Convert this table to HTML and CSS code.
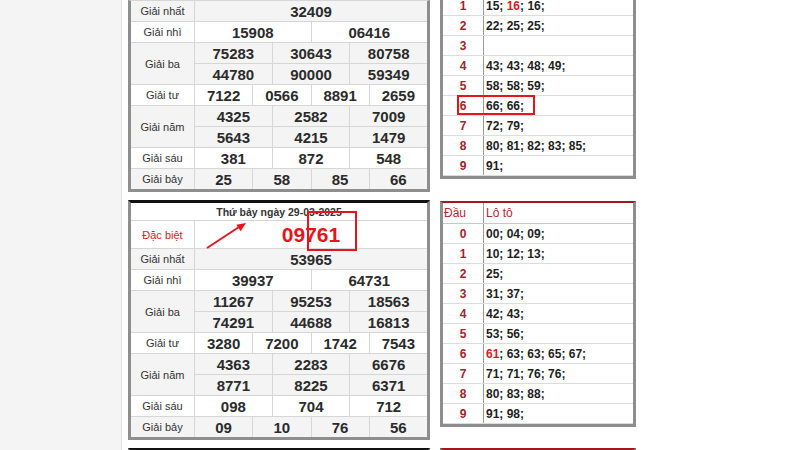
FILE: index.html
```html
<!DOCTYPE html>
<html lang="vi">
<head>
<meta charset="utf-8">
<title>Kết quả xổ số</title>
<link rel="stylesheet" href="styles.css">
</head>
<body>
<div class="page">
  <div class="side"></div>
  <main class="main">
    <section class="col-left">
      <div class="kq kq-top">
        <div class="lbl alt">Giải nhất</div><div class="num c1 alt">32409</div>
        <div class="lbl">Giải nhì</div><div class="num c2">15908</div><div class="num c2">06416</div>
        <div class="lbl alt r2">Giải ba</div><div class="num c3 alt">75283</div><div class="num c3 alt">30643</div><div class="num c3 alt">80758</div>
        <div class="num c3 alt">44780</div><div class="num c3 alt">90000</div><div class="num c3 alt">59349</div>
        <div class="lbl">Giải tư</div><div class="num c4">7122</div><div class="num c4">0566</div><div class="num c4">8891</div><div class="num c4">2659</div>
        <div class="lbl alt r2">Giải năm</div><div class="num c3 alt">4325</div><div class="num c3 alt">2582</div><div class="num c3 alt">7009</div>
        <div class="num c3 alt">5643</div><div class="num c3 alt">4215</div><div class="num c3 alt">1479</div>
        <div class="lbl">Giải sáu</div><div class="num c3">381</div><div class="num c3">872</div><div class="num c3">548</div>
        <div class="lbl alt">Giải bảy</div><div class="num c4 alt">25</div><div class="num c4 alt">58</div><div class="num c4 alt">85</div><div class="num c4 alt">66</div>
      </div>

      <div class="kq kq-full">
        <div class="hdr">Thứ bảy ngày 29-03-2025</div>
        <div class="lbl red">Đặc biệt</div><div class="num c1 db">09761</div>
        <div class="lbl alt">Giải nhất</div><div class="num c1 alt">53965</div>
        <div class="lbl">Giải nhì</div><div class="num c2">39937</div><div class="num c2">64731</div>
        <div class="lbl alt r2">Giải ba</div><div class="num c3 alt">11267</div><div class="num c3 alt">95253</div><div class="num c3 alt">18563</div>
        <div class="num c3 alt">74291</div><div class="num c3 alt">44688</div><div class="num c3 alt">16813</div>
        <div class="lbl">Giải tư</div><div class="num c4">3280</div><div class="num c4">7200</div><div class="num c4">1742</div><div class="num c4">7543</div>
        <div class="lbl alt r2">Giải năm</div><div class="num c3 alt">4363</div><div class="num c3 alt">2283</div><div class="num c3 alt">6676</div>
        <div class="num c3 alt">8771</div><div class="num c3 alt">8225</div><div class="num c3 alt">6371</div>
        <div class="lbl">Giải sáu</div><div class="num c3">098</div><div class="num c3">704</div><div class="num c3">712</div>
        <div class="lbl alt">Giải bảy</div><div class="num c4 alt">09</div><div class="num c4 alt">10</div><div class="num c4 alt">76</div><div class="num c4 alt">56</div>
      </div>

      <div class="kq-next"></div>
    </section>

    <section class="col-right">
      <div class="lt lt-top">
        <div class="row"><span class="dau">1</span><span class="lo">15; <em>16</em>; 16;</span></div>
        <div class="row"><span class="dau">2</span><span class="lo">22; 25; 25;</span></div>
        <div class="row"><span class="dau">3</span><span class="lo"></span></div>
        <div class="row"><span class="dau">4</span><span class="lo">43; 43; 48; 49;</span></div>
        <div class="row"><span class="dau">5</span><span class="lo">58; 58; 59;</span></div>
        <div class="row"><span class="dau">6</span><span class="lo">66; 66;</span></div>
        <div class="row"><span class="dau">7</span><span class="lo">72; 79;</span></div>
        <div class="row"><span class="dau">8</span><span class="lo">80; 81; 82; 83; 85;</span></div>
        <div class="row"><span class="dau">9</span><span class="lo">91;</span></div>
      </div>

      <div class="lt lt-full">
        <div class="row head"><span class="dau">Đầu</span><span class="lo">Lô tô</span></div>
        <div class="row"><span class="dau">0</span><span class="lo">00; 04; 09;</span></div>
        <div class="row"><span class="dau">1</span><span class="lo">10; 12; 13;</span></div>
        <div class="row"><span class="dau">2</span><span class="lo">25;</span></div>
        <div class="row"><span class="dau">3</span><span class="lo">31; 37;</span></div>
        <div class="row"><span class="dau">4</span><span class="lo">42; 43;</span></div>
        <div class="row"><span class="dau">5</span><span class="lo">53; 56;</span></div>
        <div class="row"><span class="dau">6</span><span class="lo"><em>61</em>; 63; 63; 65; 67;</span></div>
        <div class="row"><span class="dau">7</span><span class="lo">71; 71; 76; 76;</span></div>
        <div class="row"><span class="dau">8</span><span class="lo">80; 83; 88;</span></div>
        <div class="row"><span class="dau">9</span><span class="lo">91; 98;</span></div>
      </div>

      <div class="lt-next"></div>
    </section>
  </main>
</div>

<svg class="marks" width="800" height="450" viewBox="0 0 800 450" aria-hidden="true">
  <rect x="308" y="212" width="48" height="38" fill="none" stroke="#e8141b" stroke-width="2"/>
  <rect x="458" y="96" width="76" height="18" fill="none" stroke="#e8141b" stroke-width="2"/>
  <line x1="207" y1="248" x2="239" y2="227" stroke="#e8141b" stroke-width="2"/>
  <polygon points="246,223 240.7,231.3 236.3,224.7" fill="#e8141b"/>
</svg>
</body>
</html>
```

FILE: styles.css
```css
* { box-sizing: border-box; }

html, body {
  margin: 0;
  padding: 0;
  width: 800px;
  height: 450px;
  overflow: hidden;
  background: #ffffff;
  font-family: "Liberation Sans", Arial, sans-serif;
  color: #333;
}

body { position: relative; }

.page {
  display: flex;
  height: 450px;
}

.side {
  width: 122px;
  flex: none;
  background: #f4f4f4;
  border-right: 1px solid #e4e4e4;
}

.main {
  display: flex;
  gap: 10px;
  padding-left: 6px;
  width: 516px;
  background: #fff;
}

.col-left {
  width: 302px;
  display: flex;
  flex-direction: column;
}

.kq {
  display: grid;
  grid-template-columns: 63px repeat(12, 1fr);
  grid-auto-rows: 20px;
  gap: 1px;
  background: #d6d6d6;
  border: 3px solid #8e8e8e;
}

.kq-top {
  border-top: 1px solid #d6d6d6;
}

.kq-full {
  margin-top: 8px;
  border-top: 3px solid #111;
  grid-template-rows: 17px 27px;
}

.kq-next {
  margin-top: 8px;
  height: 4px;
  border-top: 3px solid #111;
  border-left: 3px solid #8e8e8e;
  border-right: 3px solid #8e8e8e;
}

.kq > div {
  background: #fff;
  display: flex;
  align-items: center;
  justify-content: center;
}

.kq > div.alt { background: #f4f4f4; }

.lbl {
  font-size: 11px;
  color: #333;
}

.lbl.red { color: #e3161d; }

.r2 { grid-row: span 2; }

.num {
  font-size: 15px;
  font-weight: bold;
  color: #2b2b2b;
}

.c1 { grid-column: span 12; }
.c2 { grid-column: span 6; }
.c3 { grid-column: span 4; }
.c4 { grid-column: span 3; }

.num.db {
  font-size: 21px;
  color: #e3161d;
}

.hdr {
  grid-column: 1 / -1;
  font-size: 10.5px;
  font-weight: bold;
  color: #333;
}

/* Lô tô tables */
.col-right {
  width: 196px;
  display: flex;
  flex-direction: column;
}

.lt {
  border: 3px solid #8e8e8e;
  border-top: none;
  background: #fff;
}

.lt-top { margin-top: -4px; }

.lt-full {
  margin-top: 22px;
  border-top: 2px solid #a3161c;
}

.lt-next {
  margin-top: 21px;
  height: 4px;
  border-top: 2px solid #a3161c;
  border-left: 3px solid #8e8e8e;
  border-right: 3px solid #8e8e8e;
}

.row {
  display: flex;
  height: 20px;
  border-bottom: 1px solid #dcdcdc;
  font-size: 12px;
}

.row .dau {
  width: 41px;
  flex: none;
  border-right: 1px solid #9a9a9a;
  display: flex;
  align-items: center;
  justify-content: center;
  font-weight: bold;
  color: #a4232a;
}

.row .lo {
  flex: 1;
  display: flex;
  align-items: center;
  padding-left: 2px;
  font-weight: bold;
  color: #1e1e1e;
  white-space: pre;
}

.row .lo em {
  font-style: normal;
  color: #e3161d;
}

.row.head {
  height: 21px;
  border-bottom-color: #c8c8c8;
}

.row.head .dau {
  justify-content: flex-start;
  padding-left: 1px;
  font-weight: normal;
  color: #b22a30;
}

.row.head .lo {
  font-weight: normal;
  color: #b22a30;
}

.marks {
  position: absolute;
  left: 0;
  top: 0;
  pointer-events: none;
}
```
